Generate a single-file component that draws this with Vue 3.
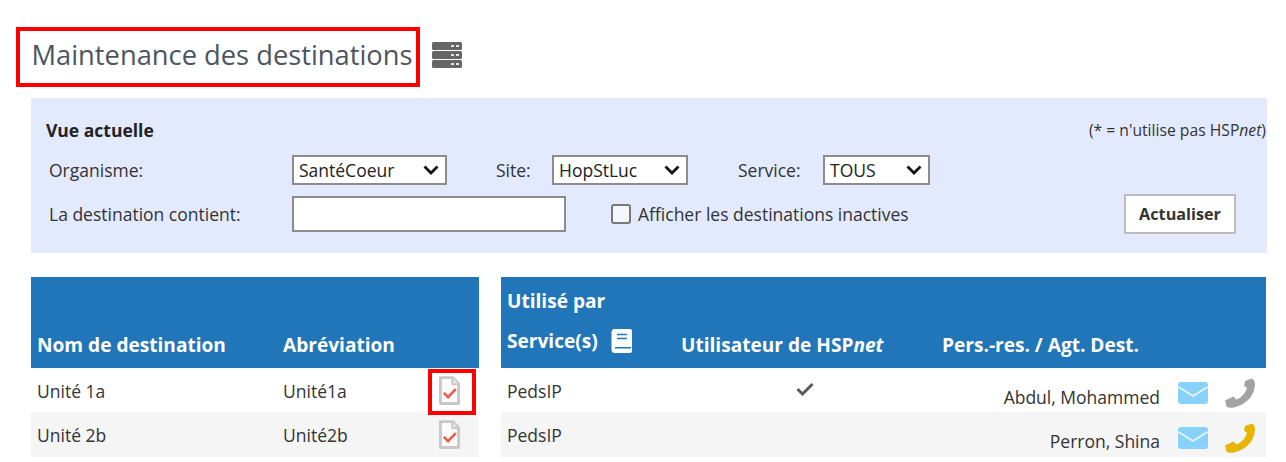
<script setup>
const leftRows = [
  { name: 'Unité 1a', abbr: 'Unité1a', marked: true },
  { name: 'Unité 2b', abbr: 'Unité2b', marked: false },
  { name: '', abbr: '', marked: false }
]
const rightRows = [
  { service: 'PedsIP', user: true, person: 'Abdul, Mohammed', phone: '#a3a3a3' },
  { service: 'PedsIP', user: false, person: 'Perron, Shina', phone: '#e8b400' }
]
</script>

<template>
  <div class="page">
    <header class="title-row">
      <h1 class="title">Maintenance des destinations</h1>
      <svg class="server" viewBox="0 0 30 26" width="30" height="26">
        <g v-for="y in [0, 9, 18]" :key="y">
          <rect x="0" :y="y" width="30" height="8" rx="1.5" fill="#666" />
          <rect x="19" :y="y + 3" width="3" height="2" fill="#e6e6e6" />
          <rect x="24" :y="y + 3" width="3" height="2" fill="#e6e6e6" />
        </g>
      </svg>
    </header>

    <section class="panel">
      <div class="panel-head">
        <strong>Vue actuelle</strong>
        <span class="note">(* = n'utilise pas HSP<em>net</em>)</span>
      </div>
      <div class="filter-row first">
        <label class="lab-main">Organisme:</label>
        <div class="sel sel-org">
          <span>SantéCoeur</span>
          <svg viewBox="0 0 16 10" width="16" height="10"><path d="M1.500 1.500 8 8l6.500-6.500" fill="none" stroke="#111" stroke-width="2.800" /></svg>
        </div>
        <label class="lab-site">Site:</label>
        <div class="sel sel-site">
          <span>HopStLuc</span>
          <svg viewBox="0 0 16 10" width="16" height="10"><path d="M1.500 1.500 8 8l6.500-6.500" fill="none" stroke="#111" stroke-width="2.800" /></svg>
        </div>
        <label class="lab-serv">Service:</label>
        <div class="sel sel-serv">
          <span>TOUS</span>
          <svg viewBox="0 0 16 10" width="16" height="10"><path d="M1.500 1.500 8 8l6.500-6.500" fill="none" stroke="#111" stroke-width="2.800" /></svg>
        </div>
      </div>
      <div class="filter-row second">
        <label class="lab-main">La destination contient:</label>
        <input class="text-input" type="text" />
        <span class="check"></span>
        <label class="check-label">Afficher les destinations inactives</label>
        <button class="refresh" type="button">Actualiser</button>
      </div>
    </section>

    <div class="tables">
      <div class="table left">
        <div class="head">
          <span class="th th-name">Nom de destination</span>
          <span class="th">Abréviation</span>
        </div>
        <div v-for="(r, i) in leftRows" :key="i" class="row">
          <span class="td-name">{{ r.name }}</span>
          <span class="td-abbr">{{ r.abbr }}</span>
          <span class="doc-cell" :class="{ marked: r.marked }">
            <svg viewBox="0 0 24 30" width="23" height="29">
              <path d="M2.500 1.500h13l6 6.500v20.500h-19z" fill="#fbfbfb" stroke="#c8c8c8" stroke-width="3" stroke-linejoin="round" />
              <path d="M15 1.500v7h6.500" fill="#e6e6e6" stroke="#c8c8c8" stroke-width="2" />
              <path d="M6 17.500l4.500 4.500 8-8.500" fill="none" stroke="#f0584c" stroke-width="2.600" />
            </svg>
          </span>
        </div>
      </div>

      <div class="table right">
        <div class="head head-right">
          <div class="used">Utilisé par</div>
          <div class="head-cols">
            <span class="th-service">
              Service(s)
              <svg viewBox="0 0 22 24" width="22" height="24">
                <path d="M3 0h16a2 2 0 0 1 2 2v20a2 2 0 0 1-2 2H4a3.500 3.500 0 0 1-3.500-3.500V3A3 3 0 0 1 3 0z" fill="#fff" />
                <path d="M6 5.500h10M6 9.500h10M4 18.800h16" stroke="#2176b9" stroke-width="1.600" />
              </svg>
            </span>
            <span class="th-user">Utilisateur de HSP<em>net</em></span>
            <span class="th-person">Pers.-res. / Agt. Dest.</span>
          </div>
        </div>
        <div v-for="(r, i) in rightRows" :key="i" class="row">
          <span class="td-service">{{ r.service }}</span>
          <span class="td-user">
            <svg v-if="r.user" viewBox="0 0 18 14" width="18" height="14"><path d="M1.500 7l5 5L16.500 2" fill="none" stroke="#5b5b5b" stroke-width="3" /></svg>
          </span>
          <span class="td-person">{{ r.person }}</span>
          <span class="td-icons">
            <svg class="mail" viewBox="0 0 30 22" width="30" height="22">
              <rect width="30" height="22" rx="3" fill="#87d1fb" />
              <path d="M0.500 5l14.500 9 14.500-9" fill="none" stroke="#e8f6ff" stroke-width="1.800" />
            </svg>
            <svg class="phone" viewBox="0 0 30 30" width="30" height="30">
              <path :fill="r.phone" d="M20 3 27 0.500Q30 2 30 7 29.500 14 25 20 19 27 9 29.500 4 30.500 1.500 28.500L0 22.500 8.500 18.500 11.500 21.500Q15.500 20 18.500 16.500 21 13.500 22 10L19 7.500z" />
            </svg>
          </span>
        </div>
      </div>
    </div>
  </div>
</template>

<style>
html, body { margin: 0; overflow: hidden; background: #fff; }
</style>

<style scoped>
.page {
  width: 1286px;
  height: 462px;
  overflow: hidden;
  box-sizing: border-box;
  padding: 27px 19px 0 31px;
  font-family: "Open Sans", "Noto Sans", sans-serif;
  color: #333;
  font-size: 17.500px;
}
.title-row { display: flex; align-items: center; margin-left: -15px; height: 60px; }
.title {
  margin: 0;
  box-sizing: border-box;
  width: 404px;
  height: 60px;
  border: 4px solid #f00;
  padding-left: 11.500px;
  font-weight: 400;
  font-size: 27.300px;
  line-height: 47px;
  color: #4d5560;
  white-space: nowrap;
}
.server { margin-left: 12px; margin-top: -4px; }

.panel {
  margin-top: 11px;
  width: 1236px;
  height: 155px;
  box-sizing: border-box;
  background: #e4eafd;
  padding: 21px 0 0 15px;
}
.panel-head { display: flex; justify-content: space-between; align-items: center; height: 22px; }
.panel-head strong { font-size: 17.500px; font-weight: 700; color: #222; }
.note { font-size: 15.700px; color: #333; white-space: nowrap; margin-right: 1px; }
.filter-row { display: flex; align-items: center; }
.first { margin-top: 14px; height: 30px; }
.second { margin-top: 9px; height: 40px; }
.lab-main { width: 243px; padding-left: 3px; flex: none; white-space: nowrap; }
.sel {
  box-sizing: border-box;
  height: 30px;
  flex: none;
  display: flex;
  align-items: center;
  justify-content: space-between;
  padding: 0 6px 0 5px;
  background: #fff;
  border: 2px solid #8c8c8c;
  color: #222;
}
.sel-org { width: 155px; }
.sel-site { width: 136px; }
.sel-serv { width: 107px; }
.lab-site { margin-left: 49px; width: 56px; flex: none; }
.lab-serv { margin-left: 50px; width: 85px; flex: none; }
.text-input {
  box-sizing: border-box;
  width: 274px;
  height: 36px;
  margin: 0;
  border: 2px solid #8c8c8c;
  background: #fff;
  flex: none;
}
.check {
  box-sizing: border-box;
  width: 20px;
  height: 20px;
  margin-left: 45px;
  border: 2px solid #777;
  border-radius: 3px;
  background: #f4f6fc;
  flex: none;
}
.check-label { margin-left: 7px; white-space: nowrap; }
.refresh {
  margin-left: auto;
  margin-right: 31px;
  width: 112px;
  height: 40px;
  box-sizing: border-box;
  background: #fff;
  border: 2px solid #bdbdbd;
  font: 700 16.200px "Open Sans", sans-serif;
  color: #333;
  padding: 0;
}

.tables { display: flex; gap: 22px; margin-top: 24px; }
.table { flex: none; }
.left { width: 448px; }
.right { width: 765px; }
.head {
  height: 91px;
  box-sizing: border-box;
  background: #2176b9;
  color: #fff;
  font-weight: 700;
  font-size: 19.100px;
}
.left .head { display: flex; align-items: flex-end; padding: 0 0 10px 6px; line-height: 26px; }
.th-name { width: 246px; }
.head-right { padding: 11px 0 0 6px; }
.used { line-height: 26px; }
.head-cols { display: flex; align-items: flex-end; margin-top: 14px; line-height: 26px; }
.th-service { width: 174px; display: flex; align-items: center; gap: 13px; margin-bottom: 4px; }
.th-user { width: 261px; white-space: nowrap; }
.th-user em, .note em { font-style: italic; }
.th-person { white-space: nowrap; }

.row { display: flex; height: 44.400px; align-items: center; background: #fff; }
.row:nth-child(odd) { background: #f5f5f5; }
.td-name { width: 246px; padding: 1px 0 0 6px; flex: none; }
.td-abbr { flex: 1; padding-top: 1px; }
.doc-cell {
  box-sizing: border-box;
  position: relative;
  width: 48px;
  height: 44px;
  margin-right: 3px;
  padding-right: 6px;
  display: flex;
  align-items: center;
  justify-content: center;
  flex: none;
}
.marked::after {
  content: "";
  position: absolute;
  left: 0;
  top: 1px;
  width: 48px;
  height: 46px;
  box-sizing: border-box;
  border: 4px solid #f00;
}
.row:nth-child(4) .doc-cell { margin-top: -5px; }
.td-service { width: 168px; padding: 1px 0 0 6px; flex: none; }
.td-user { width: 260px; flex: none; display: flex; justify-content: center; margin-top: -3px; }
.td-person { width: 225px; text-align: right; flex: none; padding-top: 13px; white-space: nowrap; }
.td-icons { display: flex; align-items: center; gap: 17px; margin-left: 18px; padding-top: 6px; }
</style>
